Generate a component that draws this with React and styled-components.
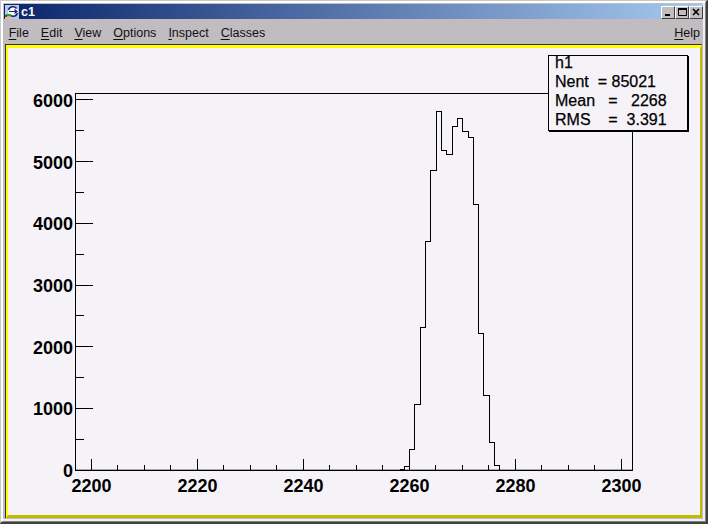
import React from 'react'
import styled, { createGlobalStyle } from 'styled-components'

const GlobalStyle = createGlobalStyle`
  html, body {
    margin: 0;
    padding: 0;
    background: #c0bcc0;
  }
  * {
    box-sizing: border-box;
  }
`

const Window = styled.div`
  width: 708px;
  height: 524px;
  border-style: solid;
  border-width: 1px 2px 2px 1px;
  border-color: #c8c8c8 #404040 #404040 #c8c8c8;
  font-family: "Liberation Sans", Arial, sans-serif;
`

const Bevel = styled.div`
  height: 100%;
  border-style: solid;
  border-width: 2px 1px 1px 2px;
  border-color: #fff #808080 #808080 #fff;
`

const Body = styled.div`
  height: 100%;
  border-style: solid;
  border-width: 0 2px 2px 0;
  border-color: #f0f0f0;
  background: #c0bcc0;
`

const Content = styled.div`
  height: 100%;
  display: flex;
  flex-direction: column;
  padding: 1px 0 1px 1px;
`

const TitleBar = styled.div`
  height: 15px;
  flex: none;
  display: flex;
  align-items: center;
  background: linear-gradient(to right, #0a246a, #a6caf0);
  padding-left: 1px;
  position: relative;
`

const TitleText = styled.span`
  margin-left: 2px;
  color: #fff;
  font-size: 12.5px;
  font-weight: bold;
`

const WinButtons = styled.div`
  margin-left: auto;
  height: 13px;
  display: flex;
  margin-top: 1px;
`

const WinButton = styled.div`
  width: 14px;
  height: 13px;
  background: #c0bcc0;
  border-style: solid;
  border-width: 1px;
  border-color: #fff #404040 #404040 #fff;
  display: flex;
  align-items: center;
  justify-content: center;
`

const MenuBar = styled.div`
  height: 25px;
  flex: none;
  display: flex;
  align-items: center;
  gap: 12px;
  padding: 2px 3px 0 4.7px;
  font-size: 12.5px;
  color: #111;
`

const MenuItem = styled.span`
  margin-left: ${(p) => (p.$right ? 'auto' : '0')};

  u {
    text-underline-offset: 2px;
  }
`

const CanvasEdge = styled.div`
  flex: 1;
  min-height: 0;
  margin: 0 1px;
  border-style: solid;
  border-width: 1px 0 0 1px;
  border-color: #303030;
`

const CanvasFrame = styled.div`
  height: 100%;
  border-style: solid;
  border-width: 3px 2px 3px 2px;
  border-color: #ffff00 #c2bb00 #c2bb00 #ffff00;
`

const Pad = styled.div`
  position: relative;
  width: 692px;
  height: 467px;
  background: #f6f3f8;
  overflow: hidden;
`

const Plot = styled.svg`
  display: block;
  width: 692px;
  height: 467px;
  shape-rendering: crispEdges;

  text {
    font-family: "Liberation Sans", Arial, sans-serif;
    font-size: 18px;
    font-weight: bold;
    fill: #000;
  }
`

const StatsBox = styled.div`
  position: absolute;
  left: 540px;
  top: 7px;
  width: 140px;
  height: 76px;
  background: #f6f3f8;
  border: 1px solid #000;
  box-shadow: 1px 1px 0 #000;
  padding: 0 0 0 6px;
  overflow: hidden;
  font-size: 16px;
  color: #000;
`

const StatsRow = styled.div`
  height: 19px;
  line-height: 13px;
  white-space: pre;
  -webkit-text-stroke: 0.25px #000;
`

const AXIS = { left: 75.5, right: 632.5, top: 93.5, bottom: 470.5 }

const yPos = (v) => Math.round(470 - v * 0.06183) + 0.5
const yBaseline = (v) => Math.round(477 - v * 0.0617)
const xPos = (v) => Math.floor(91.3 + (v - 2200) * 5.3) + 0.5

const yLabels = [0, 1000, 2000, 3000, 4000, 5000, 6000]
const yMinor = [500, 1500, 2500, 3500, 4500, 5500]
const xLabels = [2200, 2220, 2240, 2260, 2280, 2300]
const xMinor = []
for (let v = 2205; v < 2300; v += 5) {
  if (v % 20 !== 0) xMinor.push(v)
}

// histogram outline, pixel columns and rows read off the reference
const outline = [
  [399, 469], [404, 469], [404, 466], [409, 466], [409, 449], [414, 449],
  [414, 404], [420, 404], [420, 327], [425, 327], [425, 241], [430, 241],
  [430, 170], [436, 170], [436, 111], [441, 111], [441, 150], [446, 150],
  [446, 154], [452, 154], [452, 126], [457, 126], [457, 118], [462, 118],
  [462, 131], [468, 131], [468, 137], [473, 137], [473, 204], [478, 204],
  [478, 333], [483, 333], [483, 395], [489, 395], [489, 442], [494, 442],
  [494, 465], [499, 465], [499, 470],
]
const histPoints = outline.map(([x, y]) => `${x + 0.5},${y + 0.5}`).join(' ')

const RootIcon = () => (
  <svg width="14" height="14" viewBox="0 0 14 14">
    <rect x="0" y="0" width="14" height="14" fill="#b9c8e4" />
    <circle cx="8" cy="6.5" r="5" fill="#fff" />
    <path d="M11.6 3.4A4.8 4.8 0 0 0 3.4 5M4.4 9.6A4.8 4.8 0 0 0 12.6 8" fill="none" stroke="#14206a" strokeWidth="1.6" />
    <path d="M4 6.5h8M9.5 4.5l2.5 2-2.5 2" fill="none" stroke="#14206a" strokeWidth="1.2" />
    <rect x="1" y="9" width="5" height="2" fill="#1fa82a" />
    <rect x="2" y="11" width="3" height="2" fill="#e8c020" />
    <rect x="0" y="10" width="2" height="2" fill="#b02020" />
  </svg>
)

const App = () => {
  return (
    <>
      <GlobalStyle />
      <Window>
        <Bevel>
          <Body>
            <Content>
              <TitleBar>
                <RootIcon />
                <TitleText>c1</TitleText>
                <WinButtons>
                  <WinButton>
                    <svg width="8" height="8" viewBox="0 0 8 8">
                      <rect x="1" y="6" width="5" height="2" fill="#000" />
                    </svg>
                  </WinButton>
                  <WinButton>
                    <svg width="9" height="8" viewBox="0 0 9 8">
                      <path d="M0.5 1.5h8v6h-8z" fill="none" stroke="#000" />
                      <rect x="0" y="0" width="9" height="2" fill="#000" />
                    </svg>
                  </WinButton>
                  <WinButton>
                    <svg width="8" height="8" viewBox="0 0 8 8">
                      <path d="M1 1l6 6M7 1l-6 6" stroke="#000" strokeWidth="1.6" />
                    </svg>
                  </WinButton>
                </WinButtons>
              </TitleBar>
              <MenuBar>
                <MenuItem><u>F</u>ile</MenuItem>
                <MenuItem><u>E</u>dit</MenuItem>
                <MenuItem><u>V</u>iew</MenuItem>
                <MenuItem><u>O</u>ptions</MenuItem>
                <MenuItem><u>I</u>nspect</MenuItem>
                <MenuItem><u>C</u>lasses</MenuItem>
                <MenuItem $right><u>H</u>elp</MenuItem>
              </MenuBar>
              <CanvasEdge>
                <CanvasFrame>
                  <Pad>
                    <Plot viewBox="8 48 692 467">
                      <line x1={AXIS.left} y1={469.5} x2={AXIS.right} y2={469.5} stroke="#a8a8a8" />
                      <rect
                        x={AXIS.left}
                        y={AXIS.top}
                        width={AXIS.right - AXIS.left}
                        height={AXIS.bottom - AXIS.top}
                        fill="none"
                        stroke="#000"
                      />
                      {yLabels.map((v) => (
                        <g key={v}>
                          {v > 0 && <line x1={75} y1={yPos(v)} x2={93} y2={yPos(v)} stroke="#000" />}
                          <text x={73} y={yBaseline(v)} textAnchor="end">{v}</text>
                        </g>
                      ))}
                      {yMinor.map((v) => (
                        <line key={v} x1={75} y1={yPos(v)} x2={84} y2={yPos(v)} stroke="#000" />
                      ))}
                      {xLabels.map((v) => (
                        <g key={v}>
                          <line x1={xPos(v)} y1={459} x2={xPos(v)} y2={470} stroke="#000" />
                          <text x={xPos(v)} y={492} textAnchor="middle">{v}</text>
                        </g>
                      ))}
                      {xMinor.map((v) => (
                        <line key={v} x1={xPos(v)} y1={465} x2={xPos(v)} y2={470} stroke="#000" />
                      ))}
                      <polyline points={histPoints} fill="none" stroke="#000" />
                    </Plot>
                    <StatsBox>
                      <StatsRow>h1</StatsRow>
                      <StatsRow>Nent  = 85021</StatsRow>
                      <StatsRow>Mean   =   2268</StatsRow>
                      <StatsRow>RMS    =  3.391</StatsRow>
                    </StatsBox>
                  </Pad>
                </CanvasFrame>
              </CanvasEdge>
            </Content>
          </Body>
        </Bevel>
      </Window>
    </>
  )
}

export default App
